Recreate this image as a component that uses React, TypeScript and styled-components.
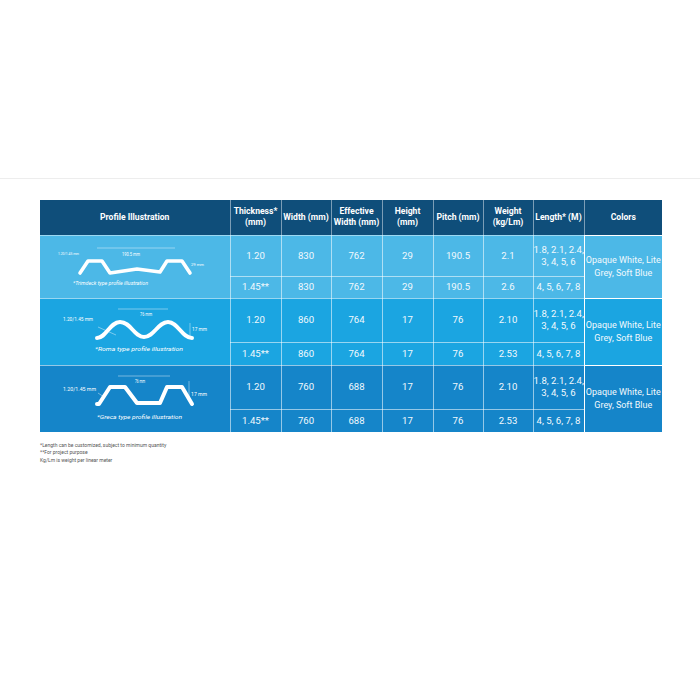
import styled, { createGlobalStyle } from 'styled-components';

const GlobalStyle = createGlobalStyle`
  html, body {
    margin: 0;
    padding: 0;
    background: #fff;
  }
  body {
    font-family: Roboto, "Liberation Sans", sans-serif;
  }
`;

/* ---- layout ---- */

const Page = styled.div`
  width: 700px;
  height: 700px;
  padding-top: 178px;
  box-sizing: border-box;
  overflow: hidden;
`;

const Rule = styled.div`
  height: 1px;
  background: #ededed;
`;

const Content = styled.div`
  padding: 21px 0 0 40px;
`;

/* ---- table ---- */

const Table = styled.table`
  border-collapse: collapse;
  border: hidden;
  table-layout: fixed;
  width: 622px;
  color: #fff;
`;

const lineColor = 'rgba(255, 255, 255, 0.55)';

const HeadRow = styled.tr`
  height: 35px;
  background: #0f4e7a;
`;

const Th = styled.th`
  border: 1px solid rgba(255, 255, 255, 0.45);
  padding: 0;
  font-size: 8.6px;
  font-weight: 700;
  line-height: 11px;
  text-align: center;
  white-space: nowrap;
`;

const Row = styled.tr<{ $bg: string; $h: number }>`
  height: ${({ $h }) => $h}px;
  background: ${({ $bg }) => $bg};
`;

const Td = styled.td`
  border: 1px solid ${lineColor};
  padding: 0;
  font-size: 9.6px;
  line-height: 12px;
  text-align: center;
  color: #f2f9fd;
  white-space: nowrap;
`;

const ProfileCell = styled.td`
  border: 1px solid ${lineColor};
  padding: 0;
  vertical-align: top;
`;

const ColorsCell = styled.td`
  border: 1px solid ${lineColor};
  padding: 0;
  font-size: 9px;
  line-height: 13px;
  text-align: center;
  white-space: nowrap;
  overflow: hidden;
  color: #f2f9fd;
`;

const Notes = styled.div`
  margin-top: 10px;
  font-size: 5px;
  line-height: 7.6px;
  color: #555;
`;

/* ---- profile drawings ---- */

const Svg = styled.svg`
  display: block;
  font-family: Roboto, "Liberation Sans", sans-serif;
`;

const Label = ({ x, y, w, size, children, italic }: {
  x: number; y: number; w: number; size: number; children: string; italic?: boolean;
}) => (
  <text
    x={x}
    y={y}
    fill="#fff"
    fontSize={size}
    fontStyle={italic ? 'italic' : 'normal'}
    textLength={w}
    lengthAdjust="spacingAndGlyphs"
  >
    {children}
  </text>
);

const TrimdeckProfile = () => (
  <Svg width="190" height="62" viewBox="0 0 190 62">
    <line x1="57" y1="12" x2="135" y2="12" stroke="rgba(255,255,255,0.7)" strokeWidth="0.6" />
    <Label x={18} y={19} w={21} size={4.2}>1.20/1.45 mm</Label>
    <Label x={82} y={20} w={18} size={4.6}>190.5 mm</Label>
    <Label x={151} y={29.5} w={13} size={4.4}>29 mm</Label>
    <polyline
      points="40,37 48,25 62,25 70,37 97,33 120,36 127,25 142,25 150,37"
      fill="none"
      stroke="#fff"
      strokeWidth="3.6"
      strokeLinecap="round"
      strokeLinejoin="round"
    />
    <Label x={33} y={49} w={75} size={4.4} italic>*Trimdeck type profile illustration</Label>
  </Svg>
);

const RomaProfile = () => (
  <Svg width="190" height="66" viewBox="0 0 190 66">
    <line x1="78" y1="10" x2="128" y2="10" stroke="rgba(255,255,255,0.7)" strokeWidth="0.6" />
    <line x1="150" y1="24" x2="150" y2="39" stroke="rgba(255,255,255,0.7)" strokeWidth="0.6" />
    <line x1="58" y1="28" x2="76" y2="36" stroke="rgba(255,255,255,0.7)" strokeWidth="0.6" />
    <Label x={23} y={22} w={30} size={5.2}>1.20/1.45 mm</Label>
    <Label x={100} y={17} w={12} size={5}>76 mm</Label>
    <Label x={152} y={32} w={15} size={5.2}>17 mm</Label>
    <path
      d="M57 39 C 66 39, 70 23, 80 23 C 91 23, 94 38, 104 38 C 114 38, 118 23, 128 23 C 138 23, 142 39, 152 39"
      fill="none"
      stroke="#fff"
      strokeWidth="4"
      strokeLinecap="round"
    />
    <Label x={55} y={52} w={88} size={6.2} italic>*Roma type profile illustration</Label>
  </Svg>
);

const GrecaProfile = () => (
  <Svg width="190" height="66" viewBox="0 0 190 66">
    <line x1="78" y1="10" x2="130" y2="10" stroke="rgba(255,255,255,0.7)" strokeWidth="0.6" />
    <line x1="149" y1="15" x2="149" y2="35" stroke="rgba(255,255,255,0.7)" strokeWidth="0.6" />
    <line x1="58" y1="27" x2="64" y2="31" stroke="rgba(255,255,255,0.7)" strokeWidth="0.6" />
    <Label x={23} y={25} w={33} size={5.2}>1.20/1.45 mm</Label>
    <Label x={95} y={17} w={10} size={4.8}>76 mm</Label>
    <Label x={151} y={30} w={16} size={5.2}>17 mm</Label>
    <polyline
      points="57,38 59,38 70,21 85,21 97,37 120,37 127,21 142,21 152,38"
      fill="none"
      stroke="#fff"
      strokeWidth="4"
      strokeLinecap="round"
      strokeLinejoin="round"
    />
    <Label x={57} y={53} w={85} size={6.2} italic>*Greca type profile illustration</Label>
  </Svg>
);

/* ---- data ---- */

type Group = {
  bg: string;
  hTop: number;
  hBottom: number;
  drawing: React.ReactNode;
  width: string;
  effective: string;
  height: string;
  pitch: string;
  weights: [string, string];
};

const groups: Group[] = [
  {
    bg: '#4cb8e7',
    hTop: 41,
    hBottom: 22,
    drawing: <TrimdeckProfile />,
    width: '830',
    effective: '762',
    height: '29',
    pitch: '190.5',
    weights: ['2.1', '2.6'],
  },
  {
    bg: '#1ba5e1',
    hTop: 44,
    hBottom: 23,
    drawing: <RomaProfile />,
    width: '860',
    effective: '764',
    height: '17',
    pitch: '76',
    weights: ['2.10', '2.53'],
  },
  {
    bg: '#1585c9',
    hTop: 44,
    hBottom: 22,
    drawing: <GrecaProfile />,
    width: '760',
    effective: '688',
    height: '17',
    pitch: '76',
    weights: ['2.10', '2.53'],
  },
];

const widths = [190, 51, 50, 51, 51, 50, 50, 51, 78];

const App = () => (
  <>
    <GlobalStyle />
    <Page>
      <Rule />
      <Content>
        <Table>
          <colgroup>
            {widths.map((w, i) => (
              <col key={i} style={{ width: w }} />
            ))}
          </colgroup>
          <thead>
            <HeadRow>
              <Th>Profile Illustration</Th>
              <Th>Thickness*<br />(mm)</Th>
              <Th>Width (mm)</Th>
              <Th>Effective<br />Width (mm)</Th>
              <Th>Height<br />(mm)</Th>
              <Th>Pitch (mm)</Th>
              <Th>Weight<br />(kg/Lm)</Th>
              <Th>Length* (M)</Th>
              <Th>Colors</Th>
            </HeadRow>
          </thead>
          <tbody>
            {groups.map((g, i) => [
              <Row key={`${i}a`} $bg={g.bg} $h={g.hTop}>
                <ProfileCell rowSpan={2}>{g.drawing}</ProfileCell>
                <Td>1.20</Td>
                <Td>{g.width}</Td>
                <Td>{g.effective}</Td>
                <Td>{g.height}</Td>
                <Td>{g.pitch}</Td>
                <Td>{g.weights[0]}</Td>
                <Td>1.8, 2.1, 2.4,<br />3, 4, 5, 6</Td>
                <ColorsCell rowSpan={2}>Opaque White, Lite<br />Grey, Soft Blue</ColorsCell>
              </Row>,
              <Row key={`${i}b`} $bg={g.bg} $h={g.hBottom}>
                <Td>1.45**</Td>
                <Td>{g.width}</Td>
                <Td>{g.effective}</Td>
                <Td>{g.height}</Td>
                <Td>{g.pitch}</Td>
                <Td>{g.weights[1]}</Td>
                <Td>4, 5, 6, 7, 8</Td>
              </Row>,
            ])}
          </tbody>
        </Table>
        <Notes>
          *Length can be customized, subject to minimum quantity<br />
          **For project purpose<br />
          Kg/Lm is weight per linear meter
        </Notes>
      </Content>
    </Page>
  </>
);

export default App;
